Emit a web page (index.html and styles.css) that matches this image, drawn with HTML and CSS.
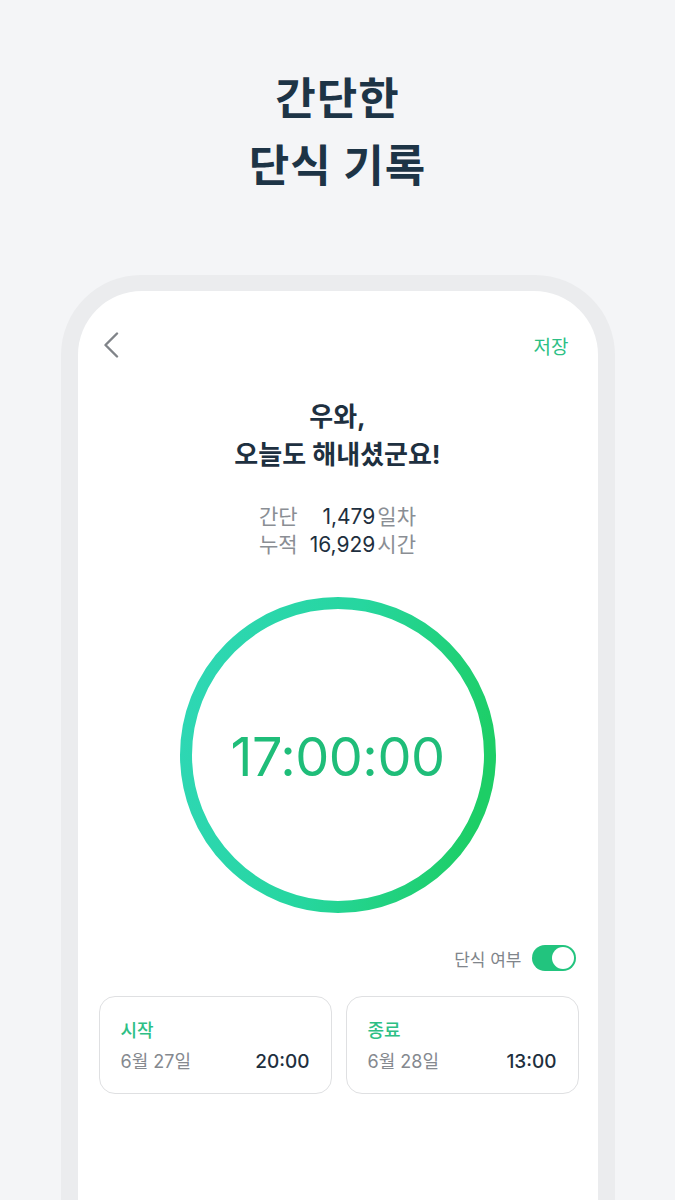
FILE: index.html
```html
<!DOCTYPE html>
<html lang="ko">
  <head>
    <meta charset="UTF-8" />
    <meta name="viewport" content="width=device-width, initial-scale=1.0" />
    <title>간단한 단식 기록</title>
    <link rel="stylesheet" href="styles.css">
  </head>
  <body>
    <h1 class="promo-title">간단한<br />단식 기록</h1>

    <div class="phone">
      <div class="screen">
        <div class="top-bar">
          <svg class="back-icon" width="16" height="26" viewBox="0 0 16 26">
            <path d="M14 1.5 L2.5 13 L14 24.5" fill="none" stroke="#808489" stroke-width="2.4" stroke-linecap="round" stroke-linejoin="round" />
          </svg>
          <span class="save-button">저장</span>
        </div>

        <h2 class="cheer">우와,<br />오늘도 해내셨군요!</h2>

        <div class="stats">
          <span class="stat-label">간단</span>
          <span class="stat-value">1,479</span>
          <span class="stat-unit">일차</span>
          <span class="stat-label">누적</span>
          <span class="stat-value">16,929</span>
          <span class="stat-unit">시간</span>
        </div>

        <div class="timer">
          <svg class="timer-ring" width="318" height="318" viewBox="0 0 318 318">
            <defs>
              <linearGradient id="ring" x1="0" y1="0.3" x2="1" y2="0.5">
                <stop offset="0" stop-color="#2ed7b4" />
                <stop offset="0.5" stop-color="#26d69f" />
                <stop offset="1" stop-color="#1dce66" />
              </linearGradient>
            </defs>
            <circle cx="159" cy="159" r="152" fill="none" stroke="url(#ring)" stroke-width="12" />
          </svg>
          <div class="timer-text">17:00:00</div>
        </div>

        <div class="fast-toggle">
          <span>단식 여부</span>
          <span class="switch"><span class="knob"></span></span>
        </div>

        <div class="time-cards">
          <div class="time-card">
            <div class="card-label">시작</div>
            <div class="card-row">
              <span class="card-date">6월 27일</span>
              <span class="card-time">20:00</span>
            </div>
          </div>
          <div class="time-card">
            <div class="card-label">종료</div>
            <div class="card-row">
              <span class="card-date">6월 28일</span>
              <span class="card-time">13:00</span>
            </div>
          </div>
        </div>
      </div>
    </div>
  </body>
</html>
```

FILE: styles.css
```css
html,
body {
  margin: 0;
  height: 1200px;
  overflow: hidden;
}
body {
  background-color: #f4f5f7;
  font-family: Inter, "Noto Sans CJK KR", sans-serif;
  color: #1e2f3e;
}
.promo-title {
  margin: 0;
  padding-top: 66px;
  text-align: center;
  font-size: 44px;
  line-height: 67px;
  font-weight: 700;
  color: #1d3446;
  letter-spacing: 1px;
}
.phone {
  width: 554px;
  margin: 75px auto 0;
  box-sizing: border-box;
  background-color: #ebecee;
  padding: 16px 17px 0;
  border-radius: 80px 80px 0 0;
  height: 1000px;
}
.screen {
  background-color: #ffffff;
  border-radius: 64px 64px 0 0;
  height: 100%;
  overflow: hidden;
}
.top-bar {
  display: flex;
  align-items: center;
  justify-content: space-between;
  height: 44px;
  margin-top: 32px;
  padding: 0 29px 0 25px;
}
.back-icon {
  display: block;
}
.save-button {
  font-size: 19px;
  color: #2dbf85;
}
.cheer {
  margin: 31px 0 0;
  text-align: center;
  font-size: 26px;
  line-height: 38px;
  font-weight: 700;
  color: #1e3040;
}
.stats {
  display: grid;
  grid-template-columns: auto auto auto;
  column-gap: 2px;
  justify-content: center;
  margin-top: 29px;
  font-size: 21px;
  line-height: 28px;
}
.stat-label {
  color: #8a8e94;
  margin-right: 10px;
}
.stat-value {
  text-align: right;
  color: #1e2f3e;
}
.stat-unit {
  color: #8a8e94;
}
.timer {
  display: grid;
  justify-content: center;
  align-items: center;
  margin-top: 37px;
}
.timer-ring,
.timer-text {
  grid-area: 1 / 1;
}
.timer-ring {
  display: block;
}
.timer-text {
  text-align: center;
  font-size: 54px;
  font-weight: 400;
  color: #1fbd79;
  letter-spacing: -0.5px;
  padding-top: 3px;
}
.fast-toggle {
  display: flex;
  align-items: center;
  justify-content: flex-end;
  gap: 10px;
  margin-top: 31px;
  padding-right: 22px;
  font-size: 17px;
  color: #80858b;
}
.switch {
  display: flex;
  justify-content: flex-end;
  width: 44px;
  height: 26px;
  box-sizing: border-box;
  padding: 2px;
  border-radius: 13px;
  background-color: #22c47e;
}
.knob {
  width: 22px;
  height: 22px;
  border-radius: 50%;
  background-color: #ffffff;
}
.time-cards {
  display: flex;
  gap: 14px;
  margin-top: 25px;
  padding: 0 19px 0 21px;
}
.time-card {
  flex: 1;
  height: 98px;
  box-sizing: border-box;
  border: 1.5px solid #dfe0e2;
  border-radius: 16px;
  padding: 20px 21px 0 21px;
}
.card-label {
  font-size: 18px;
  line-height: 28px;
  font-weight: 500;
  color: #2dbf85;
}
.card-row {
  display: flex;
  justify-content: space-between;
  align-items: center;
  margin-top: 3px;
  font-size: 18px;
  line-height: 28px;
}
.card-date {
  color: #85898f;
}
.card-time {
  font-size: 19px;
  font-weight: 500;
  color: #1e2f3e;
}
```
